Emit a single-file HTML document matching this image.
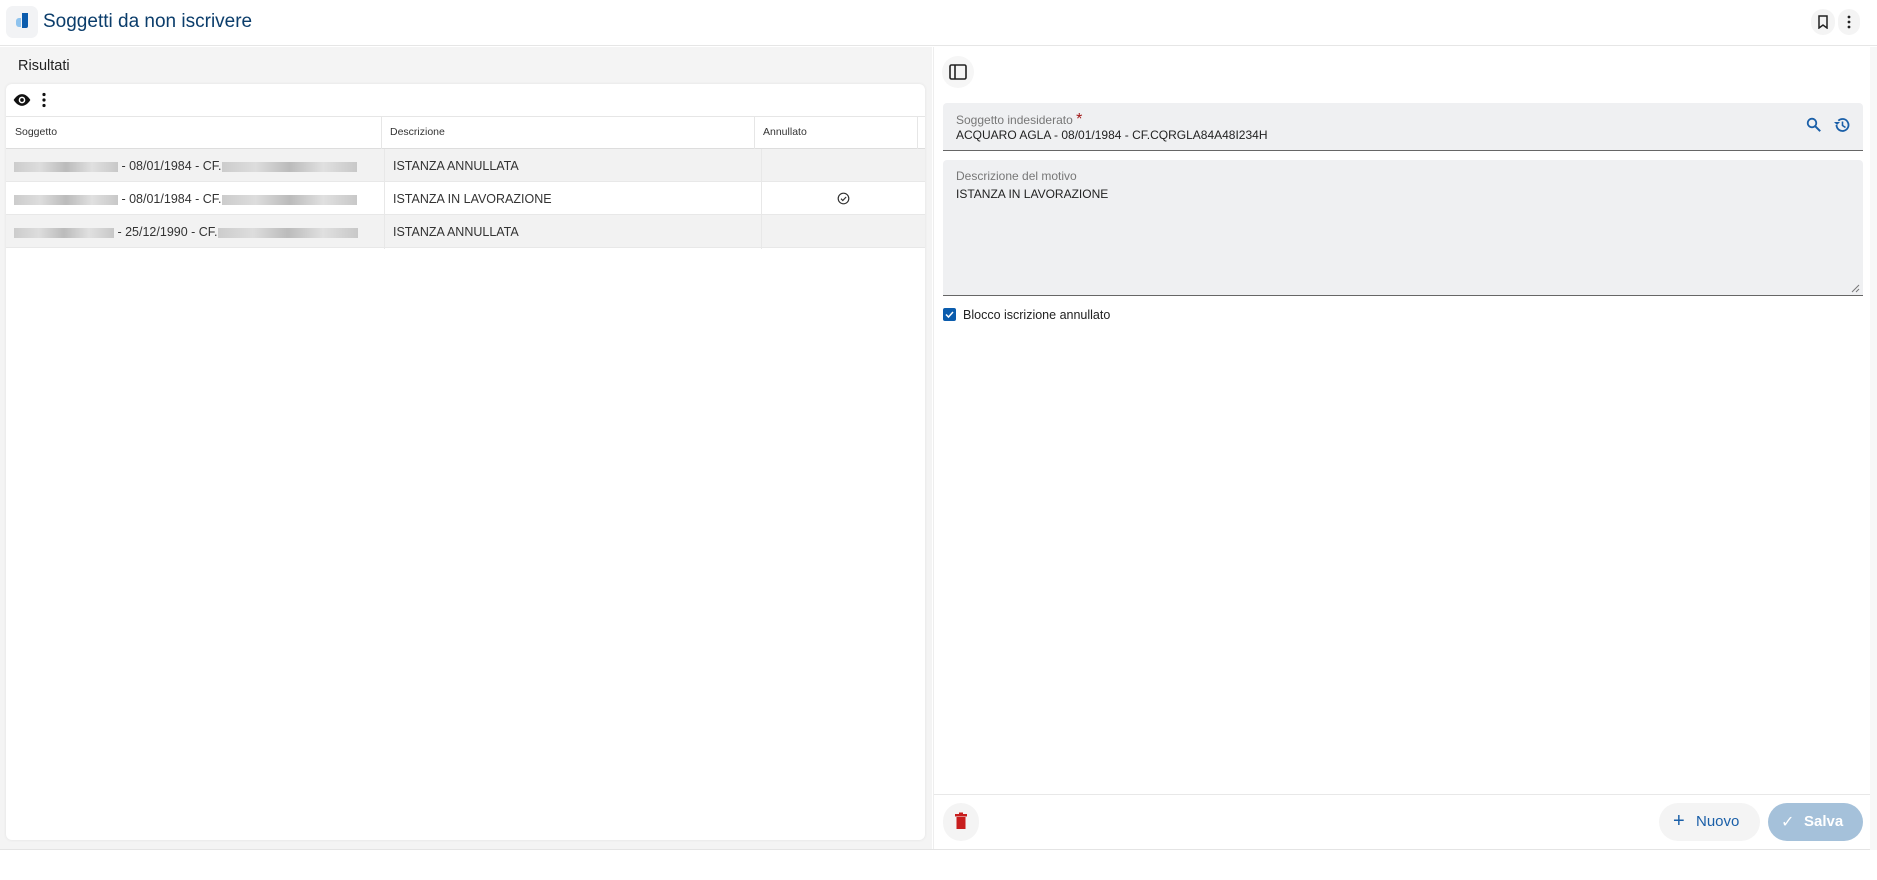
<!DOCTYPE html>
<html><head><meta charset="utf-8"><style>
*{box-sizing:border-box;margin:0;padding:0}
body{width:1877px;height:880px;background:#fff;font-family:"Liberation Sans",sans-serif;position:relative;overflow:hidden;color:#222}
.abs{position:absolute}
.hdr{left:0;top:0;width:1877px;height:46px;border-bottom:1px solid #e6e6e6;background:#fff}
.logo{left:6px;top:6px;width:32px;height:32px;border-radius:7px;background:#f2f3f5}
.title{left:43px;top:11px;font-size:19px;color:#0b3d6b}
.left{left:0;top:47px;width:932px;height:803px;background:#f4f4f4}
.card{left:6px;top:84px;width:919px;height:756px;background:#fff;border-radius:6px;box-shadow:0 0 3px rgba(0,0,0,.08)}
.th{font-size:10.5px;color:#333}
.row{left:6px;width:919px;height:33px;border-bottom:1px solid #e8e8e8}
.cell{font-size:12.5px;color:#333;top:10px}
.blur{display:inline-block;height:10px;background:linear-gradient(90deg,#ccc,#ddd,#bbb,#e0e0e0,#c8c8c8);vertical-align:middle}
.right{left:933px;top:47px;width:937px;height:803px;background:#fff;border-left:1px solid #eee}
.field{background:#eff0f2;border-radius:4px 4px 0 0;border-bottom:1px solid #666}
.lbl{font-size:12px;color:#777}
.val{font-size:12px;color:#222}
</style></head><body>
<div class="abs hdr"></div>
<div class="abs logo"><div class="abs" style="left:10px;top:12px;width:5px;height:9px;background:#8ec3ee;border-radius:3px 0 0 3px"></div><div class="abs" style="left:16px;top:7px;width:6px;height:15px;background:#0b5cad;border-radius:0 0 2px 0"></div></div>
<div class="abs title">Soggetti da non iscrivere</div>
<div class="abs" style="left:1811px;top:9px;width:24px;height:26px;border-radius:12px;background:#f4f4f4"></div>
<svg class="abs" style="left:1817px;top:15px" width="12" height="14" viewBox="0 0 12 14"><path d="M2 1h8v12l-4-3-4 3z" fill="none" stroke="#222" stroke-width="1.5"/></svg>
<div class="abs" style="left:1838px;top:9px;width:22px;height:26px;border-radius:11px;background:#f4f4f4"></div>
<svg class="abs" style="left:1846px;top:15px" width="6" height="14"><circle cx="3" cy="2" r="1.4" fill="#222"/><circle cx="3" cy="7" r="1.4" fill="#222"/><circle cx="3" cy="12" r="1.4" fill="#222"/></svg>

<div class="abs left"></div>
<div class="abs" style="left:18px;top:58px;font-size:14.5px;color:#222">Risultati</div>
<div class="abs card"></div>
<svg class="abs" style="left:12px;top:92px" width="20" height="16" viewBox="0 0 24 16"><path d="M12 1C6 1 2 8 2 8s4 7 10 7 10-7 10-7-4-7-10-7z" fill="#111"/><circle cx="12" cy="8" r="4" fill="#fff"/><circle cx="12" cy="8" r="2.2" fill="#111"/></svg>
<svg class="abs" style="left:41px;top:92px" width="6" height="16"><circle cx="3" cy="2.5" r="1.6" fill="#111"/><circle cx="3" cy="8" r="1.6" fill="#111"/><circle cx="3" cy="13.5" r="1.6" fill="#111"/></svg>
<div class="abs" style="left:6px;top:116px;width:919px;height:33px;border-top:1px solid #e6e6e6;border-bottom:1px solid #ddd"></div>
<div class="abs" style="left:381px;top:116px;width:1px;height:33px;background:#e6e6e6"></div>
<div class="abs" style="left:754px;top:116px;width:1px;height:33px;background:#e6e6e6"></div>
<div class="abs" style="left:917px;top:116px;width:1px;height:33px;background:#e6e6e6"></div>
<div class="abs th" style="left:15px;top:126px">Soggetto</div>
<div class="abs th" style="left:390px;top:126px">Descrizione</div>
<div class="abs th" style="left:763px;top:126px">Annullato</div>

<div class="abs row" style="top:149px;background:#f2f2f2"></div>
<div class="abs row" style="top:182px;background:#fff"></div>
<div class="abs row" style="top:215px;background:#f2f2f2"></div>
<div class="abs" style="left:384px;top:149px;width:1px;height:100px;background:#e8e8e8"></div>
<div class="abs" style="left:761px;top:149px;width:1px;height:100px;background:#e8e8e8"></div>
<div class="abs cell" style="left:14px;top:159px"><span class="blur" style="width:104px"></span> - 08/01/1984 - CF.<span class="blur" style="width:135px"></span></div>
<div class="abs cell" style="left:393px;top:159px">ISTANZA ANNULLATA</div>
<div class="abs cell" style="left:14px;top:192px"><span class="blur" style="width:104px"></span> - 08/01/1984 - CF.<span class="blur" style="width:135px"></span></div>
<div class="abs cell" style="left:393px;top:192px">ISTANZA IN LAVORAZIONE</div>
<svg class="abs" style="left:837px;top:192px" width="13" height="13" viewBox="0 0 13 13"><circle cx="6.5" cy="6.5" r="5.3" fill="none" stroke="#333" stroke-width="1.2"/><path d="M4 6.7l1.8 1.8 3.3-3.5" fill="none" stroke="#333" stroke-width="1.2"/></svg>
<div class="abs cell" style="left:14px;top:225px"><span class="blur" style="width:100px"></span> - 25/12/1990 - CF.<span class="blur" style="width:140px"></span></div>
<div class="abs cell" style="left:393px;top:225px">ISTANZA ANNULLATA</div>

<div class="abs right"></div>
<div class="abs" style="left:1870px;top:47px;width:7px;height:803px;background:#f7f7f7"></div>
<div class="abs" style="left:0;top:849px;width:1870px;height:1px;background:#e4e4e4"></div>
<div class="abs" style="left:942px;top:56px;width:32px;height:32px;border-radius:16px;background:#f6f6f6"></div>
<svg class="abs" style="left:949px;top:64px" width="18" height="16" viewBox="0 0 18 16"><rect x="1" y="1" width="16" height="14" rx="1.5" fill="none" stroke="#222" stroke-width="1.6"/><line x1="6" y1="1" x2="6" y2="15" stroke="#222" stroke-width="1.6"/></svg>

<div class="abs field" style="left:943px;top:103px;width:920px;height:48px"></div>
<div class="abs lbl" style="left:956px;top:111px">Soggetto indesiderato <span style="color:#a01515;font-size:16px">*</span></div>
<div class="abs val" style="left:956px;top:128px">ACQUARO AGLA - 08/01/1984 - CF.CQRGLA84A48I234H</div>
<svg class="abs" style="left:1806px;top:117px" width="16" height="16" viewBox="0 0 16 16"><circle cx="6" cy="6" r="4.3" fill="none" stroke="#1a5fa8" stroke-width="1.8"/><path d="M9.2 9.2l5 5" stroke="#1a5fa8" stroke-width="2"/></svg>
<svg class="abs" style="left:1833px;top:116px" width="18" height="18" viewBox="0 0 18 18"><path d="M3.5 9a6 6 0 1 0 1.8-4.3" fill="none" stroke="#1a5fa8" stroke-width="1.8"/><path d="M1 6l3 3 3-3z" fill="#1a5fa8"/><path d="M9.5 5.5v4l3 2" fill="none" stroke="#1a5fa8" stroke-width="1.6"/></svg>

<div class="abs field" style="left:943px;top:160px;width:920px;height:136px"></div>
<div class="abs lbl" style="left:956px;top:169px">Descrizione del motivo</div>
<div class="abs val" style="left:956px;top:187px">ISTANZA IN LAVORAZIONE</div>
<svg class="abs" style="left:1851px;top:284px" width="9" height="9"><path d="M1 8L8 1M5 8L8 5" stroke="#777" stroke-width="1"/></svg>

<div class="abs" style="left:943px;top:308px;width:13px;height:13px;background:#0b5cad;border-radius:2px"></div>
<svg class="abs" style="left:945px;top:310px" width="9" height="9"><path d="M1 4.5l2.5 2.5 4.5-5" fill="none" stroke="#fff" stroke-width="1.5"/></svg>
<div class="abs" style="left:963px;top:308px;font-size:12.5px;color:#222">Blocco iscrizione annullato</div>

<div class="abs" style="left:934px;top:794px;width:936px;height:1px;background:#e8e8e8"></div>
<div class="abs" style="left:943px;top:803px;width:36px;height:38px;border-radius:18px;background:#f4f4f4"></div>
<svg class="abs" style="left:954px;top:812px" width="14" height="18" viewBox="0 0 14 18"><rect x="1" y="2" width="12" height="2.5" fill="#c81e1e"/><rect x="5" y="0.5" width="4" height="2" fill="#c81e1e"/><rect x="2.5" y="5" width="9" height="12" fill="#c81e1e"/></svg>
<div class="abs" style="left:1659px;top:803px;width:101px;height:38px;border-radius:19px;background:#f4f4f4"></div>
<div class="abs" style="left:1673px;top:810px;font-size:20px;color:#1a5fa8">+</div>
<div class="abs" style="left:1696px;top:813px;font-size:15px;color:#1a5fa8">Nuovo</div>
<div class="abs" style="left:1768px;top:803px;width:95px;height:38px;border-radius:19px;background:#a5c1da"></div>
<div class="abs" style="left:1781px;top:812px;font-size:16px;color:#fff">✓</div>
<div class="abs" style="left:1804px;top:813px;font-size:15px;color:#fff;font-weight:bold">Salva</div>
</body></html>
